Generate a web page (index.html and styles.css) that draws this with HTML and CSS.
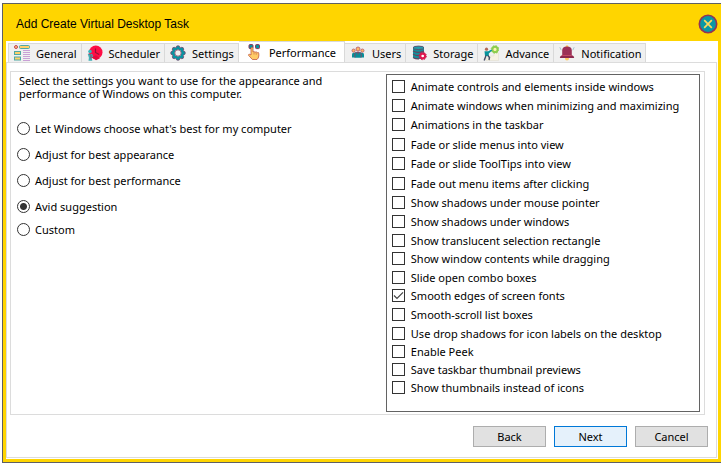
FILE: index.html
```html
<!DOCTYPE html>
<html lang="en">
  <head>
    <meta charset="UTF-8" />
    <meta name="viewport" content="width=device-width, initial-scale=1.0" />
    <title>Add Create Virtual Desktop Task</title>
    <link rel="stylesheet" href="styles.css">
  </head>
  <body>
    <div class="window">
      <header class="titlebar">
        <h1 class="title">Add Create Virtual Desktop Task</h1>
        <button class="btn-close" type="button" aria-label="Close">
          <svg width="20" height="20" viewBox="0 0 20 20">
            <circle cx="10" cy="10" r="8.7" fill="#0a97a5" stroke="#923456" stroke-width="1.6" />
            <path d="M6.2 6.2l7.6 7.6M13.8 6.2l-7.6 7.6" stroke="#ffd85e" stroke-width="1.7" fill="none" />
          </svg>
        </button>
      </header>

      <div class="body">
        <nav class="tabs" role="tablist">
          <button class="tab" type="button" role="tab">
            <svg width="16" height="16" viewBox="0 0 16 16">
              <circle cx="2" cy="2" r="1.5" fill="#ffd06a" stroke="#c4415c" />
              <rect x="5.5" y=".5" width="10" height="3" rx="1" fill="#ffd06a" stroke="#4fa8a4" />
              <rect x=".5" y="6.5" width="6" height="3" fill="#ffd06a" stroke="#4fa8a4" />
              <rect x=".5" y="12" width="6" height="3" fill="#ffd06a" stroke="#4fa8a4" />
              <path d="M9 5.5h7M9 7.5h7M9 9.5h7M9 11.5h7M9 13.5h7M9 15.5h7" stroke="#c9a0d6" />
            </svg>
            General
          </button>
          <button class="tab" type="button" role="tab">
            <svg width="16" height="16" viewBox="0 0 16 16">
              <circle cx="8.8" cy="7.2" r="6.7" fill="#ff0d45" />
              <path d="M4 12l5 3.2 4-2-4-3z" fill="#e3093c" />
              <path d="M8.5 3.5v4l3.7 2" stroke="#8f1537" stroke-width="1.2" fill="none" />
              <circle cx="3" cy="6.5" r="1.8" fill="#35b5bd" />
              <path d="M.8 9h4.4l1 3-1.6.3.7 3.4H1.5l.4-3z" fill="#43aeb6" />
              <path d="M2 8.5l2 2v3" stroke="#9e3452" fill="none" />
            </svg>
            Scheduler
          </button>
          <button class="tab" type="button" role="tab">
            <svg width="16" height="16" viewBox="0 0 16 16">
              <g fill="#0994a1" stroke="#75496f" stroke-width=".8">
                <circle cx="8" cy="2.6" r="1.9" />
                <circle cx="11.8" cy="4.2" r="1.9" />
                <circle cx="13.4" cy="8" r="1.9" />
                <circle cx="11.8" cy="11.8" r="1.9" />
                <circle cx="8" cy="13.4" r="1.9" />
                <circle cx="4.2" cy="11.8" r="1.9" />
                <circle cx="2.6" cy="8" r="1.9" />
                <circle cx="4.2" cy="4.2" r="1.9" />
              </g>
              <circle cx="8" cy="8" r="4.4" fill="#f0f0f0" stroke="#0994a1" stroke-width="2.4" />
              <circle cx="8" cy="8" r="3.2" fill="#f0f0f0" stroke="#8a4566" stroke-width=".8" />
            </svg>
            Settings
          </button>
          <button class="tab active" type="button" role="tab" aria-selected="true">
            <svg width="16" height="16" viewBox="0 0 16 16">
              <rect x="2" y=".6" width="4" height="4" rx="1" fill="#07939e" stroke="#8d3157" />
              <rect x="8.5" y=".6" width="4" height="4" rx="1" fill="#07939e" stroke="#8d3157" />
              <path d="M4 11V4.5q0-1.2 1-1.2t1 1.2V8l1-.5 1 .8 1.2-.5.9.9 1.4-.1.3 1.2V12q-.2 2.3-1.8 3.5H5.4L1.5 11.3q-.2-1.2 1.2-1z" fill="#ffcb67" stroke="#c25b43" stroke-width=".8" />
              <path d="M7 8.5v2M9.2 8.8v2" stroke="#c25b43" stroke-width=".6" />
            </svg>
            Performance
          </button>
          <button class="tab" type="button" role="tab">
            <svg width="16" height="16" viewBox="0 0 16 16">
              <path d="M2 12.5V9.5q0-2 3-2h6q3 0 3 2v3z" fill="#078f99" />
              <circle cx="3.6" cy="5.6" r="1.6" fill="#ffb866" stroke="#b5566a" stroke-width=".8" />
              <circle cx="12.4" cy="5.6" r="1.6" fill="#ffb866" stroke="#b5566a" stroke-width=".8" />
              <circle cx="8" cy="4" r="2" fill="#ffb866" stroke="#b5566a" stroke-width=".8" />
              <path d="M4.8 12.5V9q0-2 3.2-2t3.2 2v3.5" fill="#078f99" stroke="#964061" stroke-width=".8" />
              <path d="M8 7v2.5" stroke="#964061" />
            </svg>
            Users
          </button>
          <button class="tab" type="button" role="tab">
            <svg width="16" height="16" viewBox="0 0 16 16">
              <path d="M2 2.8v9.4q0 1.8 5.5 1.8T13 12.2V2.8z" fill="#168d99" />
              <ellipse cx="7.5" cy="2.8" rx="5.5" ry="1.7" fill="#249eaa" stroke="#57536f" />
              <path d="M2 6q5 2.7 11 0M2 9.3q5 2.7 11 0M2 12.5q3 1.7 6 1.4" stroke="#66445f" stroke-width="1.2" fill="none" />
              <circle cx="11.7" cy="11" r="2.4" fill="#fff" stroke="#df174f" stroke-width="2.1" />
              <circle cx="11.7" cy="11" r="3.7" fill="none" stroke="#c61c4f" stroke-dasharray="1.5 1.4" />
            </svg>
            Storage
          </button>
          <button class="tab" type="button" role="tab">
            <svg width="16" height="16" viewBox="0 0 16 16">
              <path d="M3 15.5V13h4v-2h4V8h4.5v7.5z" fill="#f6f2e3" stroke="#e3dfd0" stroke-width=".6" />
              <circle cx="12" cy="4.4" r="2.6" fill="#fff4b0" stroke="#8dce4e" stroke-width="2" />
              <circle cx="12" cy="4.4" r="3.8" fill="none" stroke="#8dce4e" stroke-dasharray="1.6 1.4" />
              <circle cx="3.5" cy="4.2" r="1.6" fill="#b26757" />
              <path d="M1.5 6.3h3.8l3.2-1.8.6 1-3.3 3V11H2z" fill="#07929b" />
              <path d="M3 10.5l-1.8 5M4.8 10.5l1.7 2-.5 2.5" stroke="#464e66" stroke-width="1.4" fill="none" />
            </svg>
            Advance
          </button>
          <button class="tab" type="button" role="tab">
            <svg width="16" height="16" viewBox="0 0 16 16">
              <circle cx="8" cy="13.6" r="2" fill="#ffca63" />
              <circle cx="8" cy="1.5" r="1.3" fill="#ffca63" />
              <path d="M3.2 11V5.5q0-4 4.8-4t4.8 4V11z" fill="#9c3157" />
              <path d="M.8 13q0-2 2.2-2.8h10q2.2.8 2.2 2.8z" fill="#8d294f" />
              <path d="M3.2 10.5h9.6" stroke="#c44b66" />
              <path d="M.8 2.2l1.4 3M15.2 2.2l-1.4 3" stroke="#a8c8d0" />
            </svg>
            Notification
          </button>
        </nav>

        <main class="pane">
          <div class="group">
            <section class="choices">
              <p class="intro">Select the settings you want to use for the appearance and performance of Windows on this computer.</p>
              <label class="radio"><input type="radio" name="effects">Let Windows choose what's best for my computer</label>
              <label class="radio"><input type="radio" name="effects">Adjust for best appearance</label>
              <label class="radio"><input type="radio" name="effects">Adjust for best performance</label>
              <label class="radio"><input type="radio" name="effects" checked>Avid suggestion</label>
              <label class="radio last"><input type="radio" name="effects">Custom</label>
            </section>

            <section class="options">
              <div class="option-set loose">
                <label class="check"><input type="checkbox">Animate controls and elements inside windows</label>
                <label class="check"><input type="checkbox">Animate windows when minimizing and maximizing</label>
                <label class="check"><input type="checkbox">Animations in the taskbar</label>
                <label class="check spaced"><input type="checkbox">Fade or slide menus into view</label>
                <label class="check"><input type="checkbox">Fade or slide ToolTips into view</label>
                <label class="check spaced"><input type="checkbox">Fade out menu items after clicking</label>
                <label class="check"><input type="checkbox">Show shadows under mouse pointer</label>
                <label class="check"><input type="checkbox">Show shadows under windows</label>
              </div>
              <div class="option-set">
                <label class="check"><input type="checkbox">Show translucent selection rectangle</label>
                <label class="check"><input type="checkbox">Show window contents while dragging</label>
                <label class="check spaced"><input type="checkbox">Slide open combo boxes</label>
                <label class="check"><input type="checkbox" checked>Smooth edges of screen fonts</label>
                <label class="check spaced"><input type="checkbox">Smooth-scroll list boxes</label>
                <label class="check spaced"><input type="checkbox">Use drop shadows for icon labels on the desktop</label>
                <label class="check"><input type="checkbox">Enable Peek</label>
                <label class="check"><input type="checkbox">Save taskbar thumbnail previews</label>
                <label class="check"><input type="checkbox">Show thumbnails instead of icons</label>
              </div>
            </section>
          </div>

          <footer class="actions">
            <button class="btn" type="button">Back</button>
            <button class="btn btn-next" type="button">Next</button>
            <button class="btn" type="button">Cancel</button>
          </footer>
        </main>
      </div>
    </div>
  </body>
</html>
```
FILE: styles.css
```css
* {
  box-sizing: border-box;
}
body {
  display: flex;
  min-height: 100vh;
  margin: 0;
  padding: 3px 0 1px 2px;
  background-color: #fff;
  color: #000;
  font-family: "Noto Sans", "Open Sans", sans-serif;
  font-size: 11px;
  line-height: 13px;
}
button {
  margin: 0;
  font: inherit;
  color: inherit;
}
.window {
  display: flex;
  flex-direction: column;
  flex: 1;
  padding: 0 3px 3px;
  background-color: #ffd500;
  border: 1px solid #5f6064;
  border-right: 0;
}
.titlebar {
  display: flex;
  align-items: center;
  justify-content: space-between;
  height: 37px;
  padding: 2px 0 0 10px;
}
.title {
  margin: 0;
  padding-top: 2px;
  font-family: "Liberation Sans", Arial, sans-serif;
  font-size: 12px;
  font-weight: normal;
}
.btn-close {
  display: flex;
  padding: 0;
  background: none;
  border: 0;
}
.body {
  display: flex;
  flex-direction: column;
  flex: 1;
  padding-bottom: 1px;
  background-color: #fff;
}
.tabs {
  display: flex;
  align-items: flex-end;
  height: 21px;
  padding-left: 2px;
}
.tab {
  display: flex;
  align-items: center;
  gap: 6px;
  height: 19px;
  padding: 0 4px 0 5px;
  background-color: #f0f0f0;
  border: 1px solid #d9d9d9;
  border-bottom: 0;
  border-left: 0;
}
.tab:first-child {
  border-left: 1px solid #d9d9d9;
}
.tab svg {
  flex: none;
}
.tab.active {
  height: 21px;
  padding: 0 8px;
  background-color: #fff;
}
.pane {
  display: flex;
  flex-direction: column;
  flex: 1;
  margin-right: 1px;
  padding: 8px 11px 10px 3px;
  border: 1px solid #dcdcdc;
}
.group {
  display: flex;
  justify-content: space-between;
  flex: 1;
  padding: 2px 4px 2px 6px;
  border: 1px solid #dcdcdc;
}
.choices {
  display: flex;
  flex-direction: column;
  align-items: flex-start;
  gap: 13px;
}
.intro {
  max-width: 332px;
  margin: 0 0 9px;
  padding-left: 2px;
}
.radio,
.check {
  display: flex;
  align-items: center;
}
.radio {
  gap: 5px;
  height: 13px;
}
.radio.last {
  margin-top: -3px;
}
.radio input,
.check input {
  flex: none;
  appearance: none;
  width: 13px;
  height: 13px;
  margin: 0;
  background-color: #fff;
  border: 1px solid #333;
}
.radio input {
  border-radius: 50%;
}
.radio input:checked {
  background-image: radial-gradient(circle, #333 3px, transparent 4px);
}
.options {
  flex: 0 0 46%;
  padding: 2px 5px;
  border: 1px solid #636363;
}
.check {
  gap: 6px;
  height: 18px;
}
.loose .check {
  height: 19px;
}
.option-set .check.spaced {
  margin-top: 1px;
}
.check input:checked {
  background-image: url("data:image/svg+xml,%3Csvg xmlns='http://www.w3.org/2000/svg' viewBox='0 0 11 11'%3E%3Cpath d='M1 5.5l3 3L10 2.3' fill='none' stroke='%23444' stroke-width='1.2'/%3E%3C/svg%3E");
}
.actions {
  display: flex;
  justify-content: flex-end;
  gap: 8px;
  margin: 11px -3px 0 0;
}
.btn {
  width: 73px;
  height: 21px;
  padding: 0;
  background-color: #e1e1e1;
  border: 1px solid #adadad;
}
.btn-next {
  background-color: #e5f1fb;
  border-color: #0078d7;
}
```
